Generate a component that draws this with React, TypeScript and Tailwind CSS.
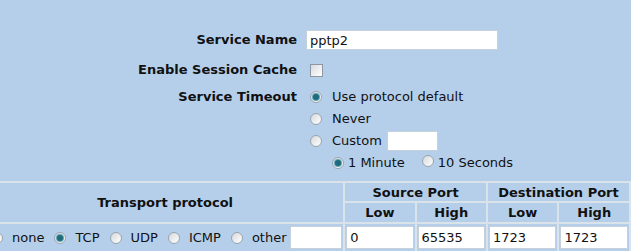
import React from 'react';

const font = { fontFamily: '"DejaVu Sans", Verdana, sans-serif' };

function Radio({ checked = false }: { checked?: boolean }) {
  return (
    <span className="relative inline-flex h-[12px] w-[12px] shrink-0 items-center justify-center rounded-full border border-[#9aa4ae] bg-gradient-to-br from-[#d6d9dc] to-[#ffffff]">
      {checked && <span className="h-[6px] w-[6px] rounded-full bg-[#1f6a7c] ring-1 ring-[#5fa7b6]" />}
    </span>
  );
}

function Checkbox() {
  return <span className="inline-block h-[13px] w-[13px] border border-[#8c97a3] bg-gradient-to-br from-[#d9dcdf] to-[#ffffff]" />;
}

function TextBox({ value = '', className = '' }: { value?: string; className?: string }) {
  return (
    <input
      readOnly
      value={value}
      className={`border border-[#c6d0da] bg-white pl-[3px] text-[13px] text-[#111] outline-none ${className}`}
      style={font}
    />
  );
}

function FormRow({ label, children, className = '' }: { label: string; children: React.ReactNode; className?: string }) {
  return (
    <div className={`flex ${className}`}>
      <div className="w-[297px] shrink-0 text-right font-bold leading-[22px]">{label}</div>
      <div className="ml-[9px]">{children}</div>
    </div>
  );
}

const protocols = [
  { name: 'none', checked: false },
  { name: 'TCP', checked: true },
  { name: 'UDP', checked: false },
  { name: 'ICMP', checked: false },
  { name: 'other', checked: false },
];

export default function App() {
  return (
    <div className="h-[251px] w-[631px] overflow-hidden bg-[#b5cfeb] text-[13px] text-[#111]" style={font}>
      <div className="pt-[29px]">
        <FormRow label="Service Name">
          <div className="flex h-[22px] items-center">
            <TextBox value="pptp2" className="h-[20px] w-[192px]" />
          </div>
        </FormRow>

        <FormRow label="Enable Session Cache" className="mt-[8px]">
          <div className="flex h-[22px] items-center pl-[4px]">
            <Checkbox />
          </div>
        </FormRow>

        <FormRow label="Service Timeout" className="mt-[5px]">
          <div className="flex flex-col pl-[4px]">
            <div className="flex h-[22px] items-center gap-[10px]">
              <Radio checked />
              <span>Use protocol default</span>
            </div>
            <div className="flex h-[22px] items-center gap-[10px]">
              <Radio />
              <span>Never</span>
            </div>
            <div className="flex h-[22px] items-center gap-[10px]">
              <Radio />
              <span>Custom</span>
              <TextBox className="-ml-[5px] h-[20px] w-[51px]" />
            </div>
            <div className="flex h-[22px] items-center pl-[22px]">
              <Radio checked />
              <span className="ml-[4px]">1 Minute</span>
              <span className="ml-[17px]">
                <Radio />
              </span>
              <span className="ml-[4px]">10 Seconds</span>
            </div>
          </div>
        </FormRow>
      </div>

      <table className="-ml-[15px] mt-[7px] border-separate border-spacing-[2px] bg-[#dae2ea]">
        <tbody>
          <tr className="h-[18px]">
            <th rowSpan={2} className="w-[357px] bg-[#b5cfeb] text-center font-bold leading-none">
              Transport protocol
            </th>
            <th colSpan={2} className="bg-[#b5cfeb] text-center font-bold leading-none">
              Source Port
            </th>
            <th colSpan={2} className="bg-[#b5cfeb] text-center font-bold leading-none">
              Destination Port
            </th>
          </tr>
          <tr className="h-[19px]">
            <th className="w-[70px] bg-[#b5cfeb] font-bold leading-none">Low</th>
            <th className="w-[70px] bg-[#b5cfeb] font-bold leading-none">High</th>
            <th className="w-[70px] bg-[#b5cfeb] font-bold leading-none">Low</th>
            <th className="w-[70px] bg-[#b5cfeb] font-bold leading-none">High</th>
          </tr>
          <tr className="h-[28px]">
            <td className="bg-[#b5cfeb] pt-[2px] align-top">
              <div className="flex h-[23px] items-center pl-[4px]">
                {protocols.map((p, i) => (
                  <div key={p.name} className={`flex items-center gap-[9px] ${i > 0 ? 'ml-[10px]' : ''}`}>
                    <Radio checked={p.checked} />
                    <span>{p.name}</span>
                  </div>
                ))}
                <TextBox className="ml-[3px] mr-[1px] h-[23px] w-0 flex-1" />
              </div>
            </td>
            {['0', '65535', '1723', '1723'].map((v, i) => (
              <td key={i} className="bg-[#b5cfeb] px-[1px] pt-[2px] align-top">
                <TextBox value={v} className="h-[23px] w-full" />
              </td>
            ))}
          </tr>
        </tbody>
      </table>
    </div>
  );
}
